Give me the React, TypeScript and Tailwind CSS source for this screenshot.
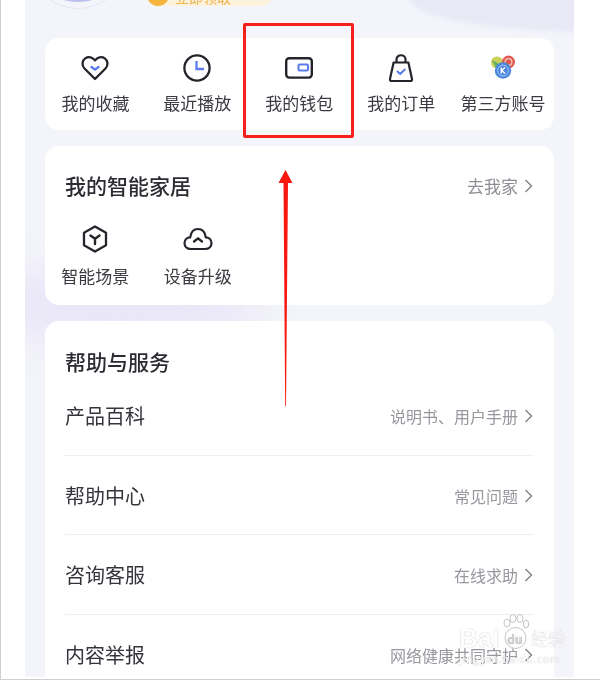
import React from "react";

const ink = "#23252b";
const blue = "#5b7cf0";

function Heart() {
  return (
    <svg width="30" height="28" viewBox="0 0 30 28" fill="none">
      <path d="M15 25 L4.5 14.5 C1.5 11.3 2 6.6 5.2 4.4 C8.6 2.2 12.6 3.4 15 6.4 C17.4 3.4 21.4 2.2 24.8 4.4 C28 6.6 28.5 11.3 25.5 14.5 Z" stroke={ink} strokeWidth="2.3" strokeLinejoin="round" />
      <path d="M11.5 13 L15 15.6 L18.5 13" stroke={blue} strokeWidth="2.4" strokeLinecap="round" strokeLinejoin="round" />
    </svg>
  );
}
function Clock() {
  return (
    <svg width="30" height="30" viewBox="0 0 30 30" fill="none">
      <circle cx="15" cy="15" r="12.6" stroke={ink} strokeWidth="2.3" />
      <path d="M14.5 8 V16 H22" stroke={blue} strokeWidth="2.3" />
    </svg>
  );
}
function Wallet() {
  return (
    <svg width="30" height="24" viewBox="0 0 30 24" fill="none">
      <rect x="2.2" y="2.2" width="25.6" height="19.4" rx="3" stroke={ink} strokeWidth="2.4" />
      <rect x="14.5" y="8.5" width="9.5" height="6" rx="1" stroke={blue} strokeWidth="2" />
    </svg>
  );
}
function Bag() {
  return (
    <svg width="26" height="30" viewBox="0 0 26 30" fill="none">
      <path d="M5.6 9.5 H20.4 L24 26 Q24.3 28 22.4 28 H3.6 Q1.7 28 2 26 Z" stroke={ink} strokeWidth="2.2" strokeLinejoin="round" />
      <path d="M8.5 9.5 V6.5 C8.5 0.8 17.5 0.8 17.5 6.5 V9.5" stroke={ink} strokeWidth="2.2" />
      <path d="M9.5 18.5 L12.2 21 L16.8 16.5" stroke={blue} strokeWidth="2" strokeLinecap="round" strokeLinejoin="round" />
    </svg>
  );
}
function Accounts() {
  return (
    <svg width="26" height="26" viewBox="0 0 26 26">
      <circle cx="7" cy="7.5" r="6" fill="#c9cf58" />
      <path d="M2 5 L9 9 L6 13 Z" fill="#5dae6c" />
      <circle cx="18.5" cy="7" r="6.5" fill="#df5a50" />
      <circle cx="18.5" cy="7" r="3.4" fill="none" stroke="#f7c9c4" strokeWidth="1.2" />
      <circle cx="13" cy="15.5" r="8.2" fill="#4a86dc" />
      <circle cx="13" cy="15.5" r="5.4" fill="none" stroke="#a9cbf5" strokeWidth="1" />
      <path d="M11.3 12.6 V18.4 M15 12.6 L11.8 15.5 L15 18.4" fill="none" stroke="#ffffff" strokeWidth="1.4" />
    </svg>
  );
}
function Hex() {
  return (
    <svg width="28" height="30" viewBox="0 0 28 30" fill="none">
      <path d="M14 2.5 L25 8.7 V21.3 L14 27.5 L3 21.3 V8.7 Z" stroke={ink} strokeWidth="2.3" strokeLinejoin="round" />
      <path d="M9.5 11.5 L14 14.8 L18.5 11.5 M14 14.8 V20" stroke={ink} strokeWidth="2.4" strokeLinecap="round" strokeLinejoin="round" />
    </svg>
  );
}
function Cloud() {
  return (
    <svg width="30" height="24" viewBox="0 0 30 24" fill="none">
      <path d="M8 22 C3.6 22 1.5 19 1.5 16 C1.5 12.8 4 10.4 7.2 10.3 C8 5 11 2 15 2 C19 2 22 5 22.8 10.3 C26 10.4 28.5 12.8 28.5 16 C28.5 19 26.4 22 22 22 Z" stroke={ink} strokeWidth="2.2" strokeLinejoin="round" />
      <path d="M11 14.5 L15 11.3 L19 14.5" stroke={ink} strokeWidth="2.3" strokeLinecap="round" strokeLinejoin="round" />
    </svg>
  );
}
function Chevron() {
  return (
    <svg width="9" height="14" viewBox="0 0 9 14" fill="none" className="ml-[6px]">
      <path d="M1.5 1 L7.5 7 L1.5 13" stroke="#808287" strokeWidth="1.4" />
    </svg>
  );
}
function Paw() {
  return (
    <svg width="26" height="36" viewBox="0 0 26 36" fill="#ffffff" stroke="#c4c4c7" strokeWidth="1">
      <ellipse cx="4" cy="9" rx="3" ry="4" />
      <ellipse cx="10" cy="4.5" rx="3" ry="4" />
      <ellipse cx="17" cy="4.5" rx="3" ry="4" />
      <ellipse cx="23" cy="10" rx="2.6" ry="4" />
      <circle cx="12.5" cy="24" r="10.5" />
    </svg>
  );
}

function Tile({ icon, label, gapClass }: { icon: React.ReactNode; label: string; gapClass: string }) {
  return (
    <div className="flex flex-col items-center w-[102.5px]">
      <div className="h-[32px] flex items-center justify-center">{icon}</div>
      <span className={`${gapClass} text-[17px] leading-[24px] text-[#3a3c42] whitespace-nowrap`}>{label}</span>
    </div>
  );
}

function Row({ title, note, divider }: { title: string; note: string; divider?: boolean }) {
  return (
    <div className={`h-[79.5px] pt-[2px] pr-[1px] flex items-center justify-between ${divider ? "border-b border-[#eeeff2]" : ""}`}>
      <span className="text-[20px] text-[#33353b]">{title}</span>
      <span className="flex items-center text-[16px] text-[#96989d]">
        {note}
        <Chevron />
      </span>
    </div>
  );
}

export default function App() {
  return (
    <div
      className="relative w-[600px] h-[680px] overflow-hidden bg-white flex border-l border-b border-[#cfcfcf] blur-[0.4px]"
      style={{ fontFamily: '"Noto Sans CJK SC", "Noto Sans", sans-serif' }}
    >
      <div className="relative ml-[24px] w-[549px] h-[677px] overflow-hidden bg-[#f4f5fb] px-[20px]">
        {/* soft backdrop shapes */}
        <div className="absolute left-[385px] -top-[33px] w-[400px] h-[66px] rounded-[50%] bg-[#e9e9f6] blur-[2px]" />
        <div className="absolute -left-[60px] top-[270px] w-[300px] h-[70px] rounded-[50%] bg-[#e8e4f6] blur-[22px]" />

        {/* avatar + badge, cut off by the top edge */}
        <div className="absolute left-[3px] -top-[91px] w-[100px] h-[100px] rounded-full border border-[#e6e6f2] flex items-end justify-center overflow-hidden">
          <div className="w-[110px] h-[110px] shrink-0 rounded-full bg-[#bcbfee] mb-[6px]" />
        </div>
        <div className="absolute left-[122px] -top-[14px] w-[125px] h-[20px] rounded-full bg-[#fdf3dd] flex items-center pl-[28px]">
          <div className="absolute left-0 -top-[2px] w-[22px] h-[22px] rounded-full bg-[#f5b53c]" />
          <span className="text-[14px] leading-[16px] text-[#eeb24f] mt-[1px]">立即领取</span>
        </div>

        <div className="relative pt-[38px] flex flex-col gap-[16px]">
          <section className="h-[92px] rounded-[14px] bg-white pt-[14px]">
            <div className="flex -ml-[0.5px]">
              <Tile gapClass="mt-[7px]" icon={<Heart />} label="我的收藏" />
              <Tile gapClass="mt-[7px]" icon={<Clock />} label="最近播放" />
              <Tile gapClass="mt-[7px]" icon={<Wallet />} label="我的钱包" />
              <Tile gapClass="mt-[7px]" icon={<Bag />} label="我的订单" />
              <Tile gapClass="mt-[7px]" icon={<Accounts />} label="第三方账号" />
            </div>
          </section>

          <section className="h-[159px] rounded-[14px] bg-white">
            <div className="flex items-center justify-between pl-[20px] pr-[21px] h-[80px]">
              <h2 className="text-[21px] font-medium text-[#2a2c32]">我的智能家居</h2>
              <span className="flex items-center text-[17px] text-[#8d8f94]">
                去我家
                <Chevron />
              </span>
            </div>
            <div className="flex -mt-[3px] -ml-[1px]">
              <Tile gapClass="mt-[9px]" icon={<Hex />} label="智能场景" />
              <Tile gapClass="mt-[9px]" icon={<Cloud />} label="设备升级" />
            </div>
          </section>

          <section className="rounded-t-[14px] bg-white px-[20px] pt-[24px] h-[400px]">
            <h2 className="text-[21px] leading-[32px] font-medium text-[#2a2c32]">帮助与服务</h2>
            <div className="-mt-[1px]">
              <Row title="产品百科" note="说明书、用户手册" divider />
              <Row title="帮助中心" note="常见问题" divider />
              <Row title="咨询客服" note="在线求助" divider />
              <Row title="内容举报" note="网络健康共同守护" />
            </div>
          </section>
        </div>
      </div>

      {/* annotation: red frame and arrow */}
      <div className="absolute left-[242px] top-[23px] w-[111px] h-[115px] rounded-[2px] border-[3px] border-[#f5201c]" />
      <svg className="absolute left-[275px] top-[168px]" width="20" height="240" viewBox="0 0 20 240">
        <path d="M9.5 2 L16.5 15 H12 L10 238 L9.2 238 L7.5 15 H2.5 Z" fill="#f8180f" />
      </svg>

      {/* watermark */}
      <div className="absolute left-[458px] top-[614px] flex flex-col items-start">
        <div className="flex items-end h-[36px] text-[#ffffff] [text-shadow:0_0_1px_#a8a8ac]">
          <span className="w-[44px] text-[26px] leading-[24px] font-bold" style={{ fontFamily: '"Liberation Sans", sans-serif' }}>Bai</span>
          <span className="relative w-[26px] h-[36px]">
            <Paw />
            <span className="absolute left-[4px] top-[19px] text-[12px] leading-[12px] font-bold text-[#d0d0d3]">du</span>
          </span>
          <span className="ml-[2px] text-[17px] leading-[24px]">经验</span>
        </div>
        <span className="mt-[3px] text-[10.5px] leading-[12px] text-[#ffffff] [text-shadow:0_0_1px_#a8a8ac] tracking-[0.6px]">jingyan.baidu.com</span>
      </div>
    </div>
  );
}
